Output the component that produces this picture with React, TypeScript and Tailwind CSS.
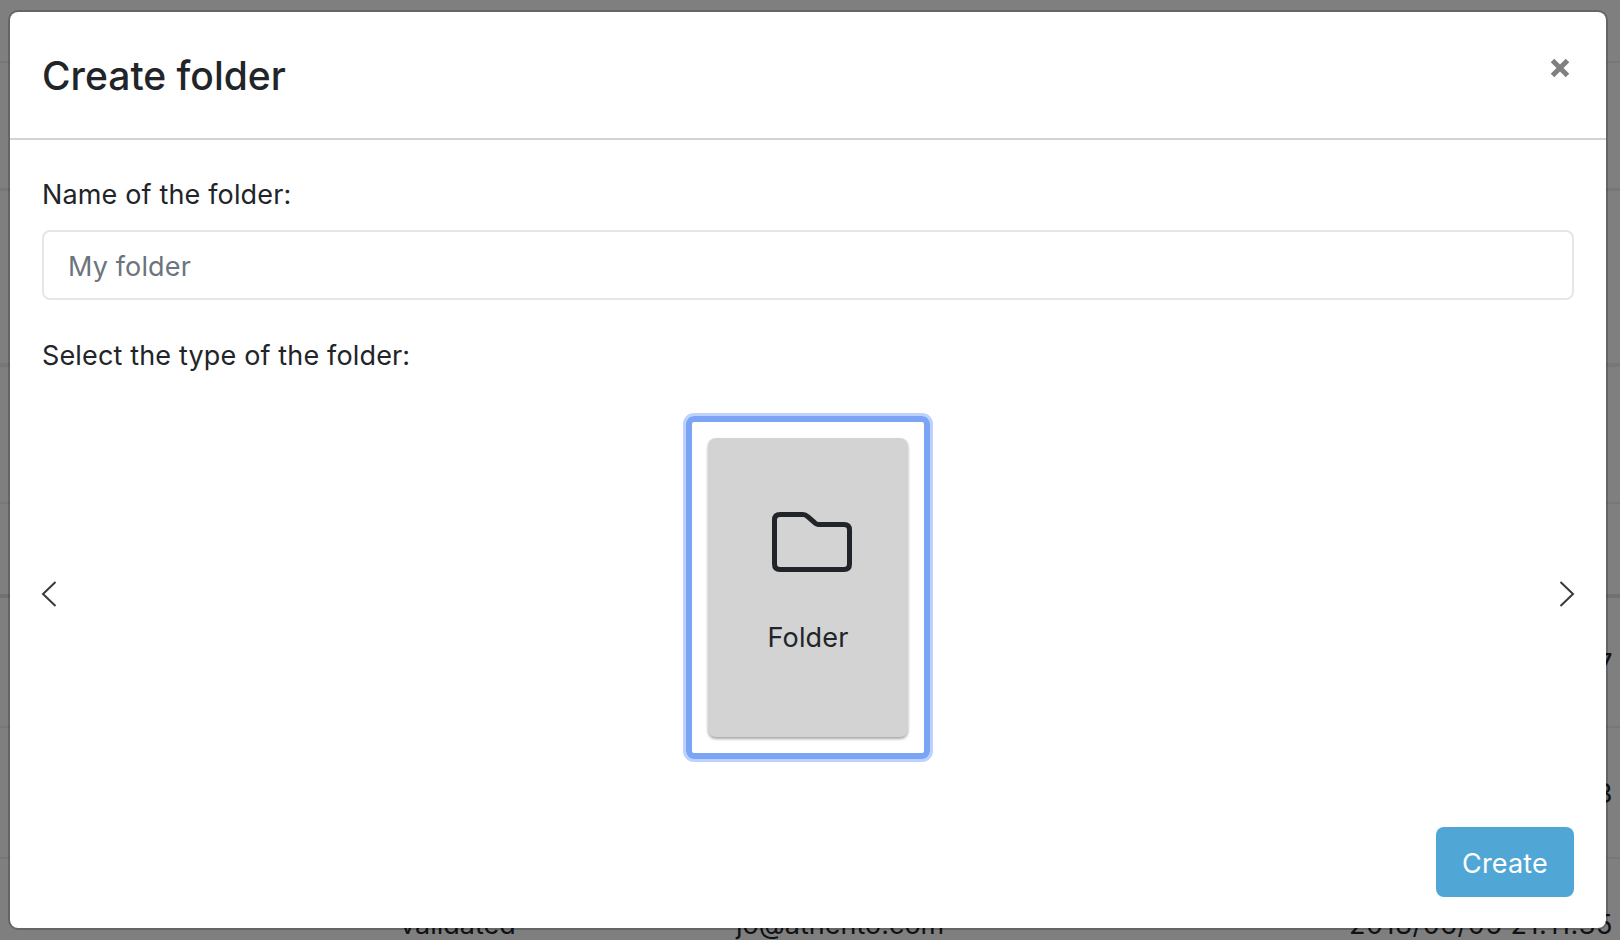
import React from 'react';

const rows = [
  { height: 'h-[63px]', line: 'border-b-[2px] border-[#eceeef]' },
  { height: 'h-[128px]', line: 'border-b-[3px] border-[#eceeef]' },
  { height: 'h-[176px]', line: 'border-b-[4px] border-[#eceeef]' },
  { height: 'h-[137px]', line: 'border-b-[2px] border-[#eceeef]' },
  { height: 'h-[94px]', line: 'border-b-[4px] border-[#dee2e6]' },
  { height: 'h-[130px]', line: 'border-b-[2px] border-[#eceeef]', status: 'validated', email: 'jo@athento.com', date: '2018/06/05 21:11:37' },
  { height: 'h-[131px]', line: 'border-b-[2px] border-[#eceeef]', status: 'validated', email: 'jo@athento.com', date: '2018/06/05 21:11:33' },
  { height: 'h-[130px]', line: 'border-b-[2px] border-[#eceeef]', status: 'validated', email: 'jo@athento.com', date: '2018/06/05 21:11:35' },
];

const Chevron = ({ left }: { left?: boolean }) => (
  <svg width="16" height="26" viewBox="0 0 16 26" fill="none" className="shrink-0">
    <path
      d={left ? 'M14.5 1 L2 13 L14.5 25' : 'M1.5 1 L14 13 L1.5 25'}
      stroke="#343a40"
      strokeWidth="2"
    />
  </svg>
);

export default function App() {
  return (
    <div className="relative h-[940px] w-[1620px] overflow-hidden bg-white font-['Inter',sans-serif] text-[#212529]">
      {/* table behind the modal */}
      <div className="text-[27px]">
        {rows.map((row, i) => (
          <div
            key={i}
            className={`${row.height} ${row.line} grid grid-cols-[400px_336px_1fr] items-center pr-[7px] pt-1`}
          >
            <div />
            <div>{row.status}</div>
            <div className="flex justify-between">
              <span>{row.email}</span>
              <span className="tracking-[0.55px]">{row.date}</span>
            </div>
          </div>
        ))}
      </div>

      {/* backdrop */}
      <div className="absolute inset-0 bg-black/50" />

      {/* modal */}
      <div className="absolute left-2 top-[10px] flex h-[920px] w-[1600px] flex-col rounded-[10px] border-2 border-black/20 bg-white bg-clip-padding">
        <div className="flex h-[128px] shrink-0 items-start justify-between border-b-2 border-[#d0d4d8] pl-8 pr-9">
          <h5 className="mt-[35px] text-[39px] leading-[58px] font-[450]">Create folder</h5>
          <svg width="20" height="20" viewBox="0 0 20 20" className="mt-[46px]">
            <path d="M2.5 2.5 L17.5 17.5 M17.5 2.5 L2.5 17.5" stroke="#808080" strokeWidth="5" />
          </svg>
        </div>

        <div className="flex flex-1 flex-col px-8 text-[27px] tracking-[0.15px]">
          <label className="mt-[37px] leading-[36px]">Name of the folder:</label>
          <input
            placeholder="My folder"
            className="mt-[17px] h-[70px] w-full rounded-lg border-2 border-[#e4e6e9] px-6 pt-[3px] outline-none placeholder:text-[#6c757d]"
          />
          <label className="mt-[38px] leading-[36px]">Select the type of the folder:</label>

          <div className="mt-[42px] flex items-center justify-between">
            <div className="-ml-px mt-[13px] flex"><Chevron left /></div>
            <div className="mx-auto rounded-lg border-[6px] border-[#7ba3f6] p-[16px] shadow-[0_0_0_3px_#bcd1fb]">
              <div className="flex h-[299px] w-[200px] flex-col items-center rounded-lg bg-[#d3d3d3] shadow-[0_2px_3px_rgba(0,0,0,0.35)]">
                <svg width="80" height="60" viewBox="0 0 80 60" fill="none" className="ml-[8px] mt-[74px]">
                  <path
                    d="M8 2.5 H31 Q33.5 2.5 35.5 4.5 L42 10 Q44 12.5 47 12.5 H72 Q77.5 12.5 77.5 18 V52 Q77.5 57.5 72 57.5 H8 Q2.5 57.5 2.5 52 V8 Q2.5 2.5 8 2.5 Z"
                    stroke="#212529"
                    strokeWidth="5"
                  />
                </svg>
                <span className="mt-[48px] leading-[36px]">Folder</span>
              </div>
            </div>
            <div className="-mr-px mt-[13px] flex"><Chevron /></div>
          </div>

          <div className="mt-[68px] flex justify-end">
            <button className="h-[70px] w-[138px] rounded-lg bg-[#50a6d5] pt-[5px] text-white">Create</button>
          </div>
        </div>
      </div>
    </div>
  );
}
